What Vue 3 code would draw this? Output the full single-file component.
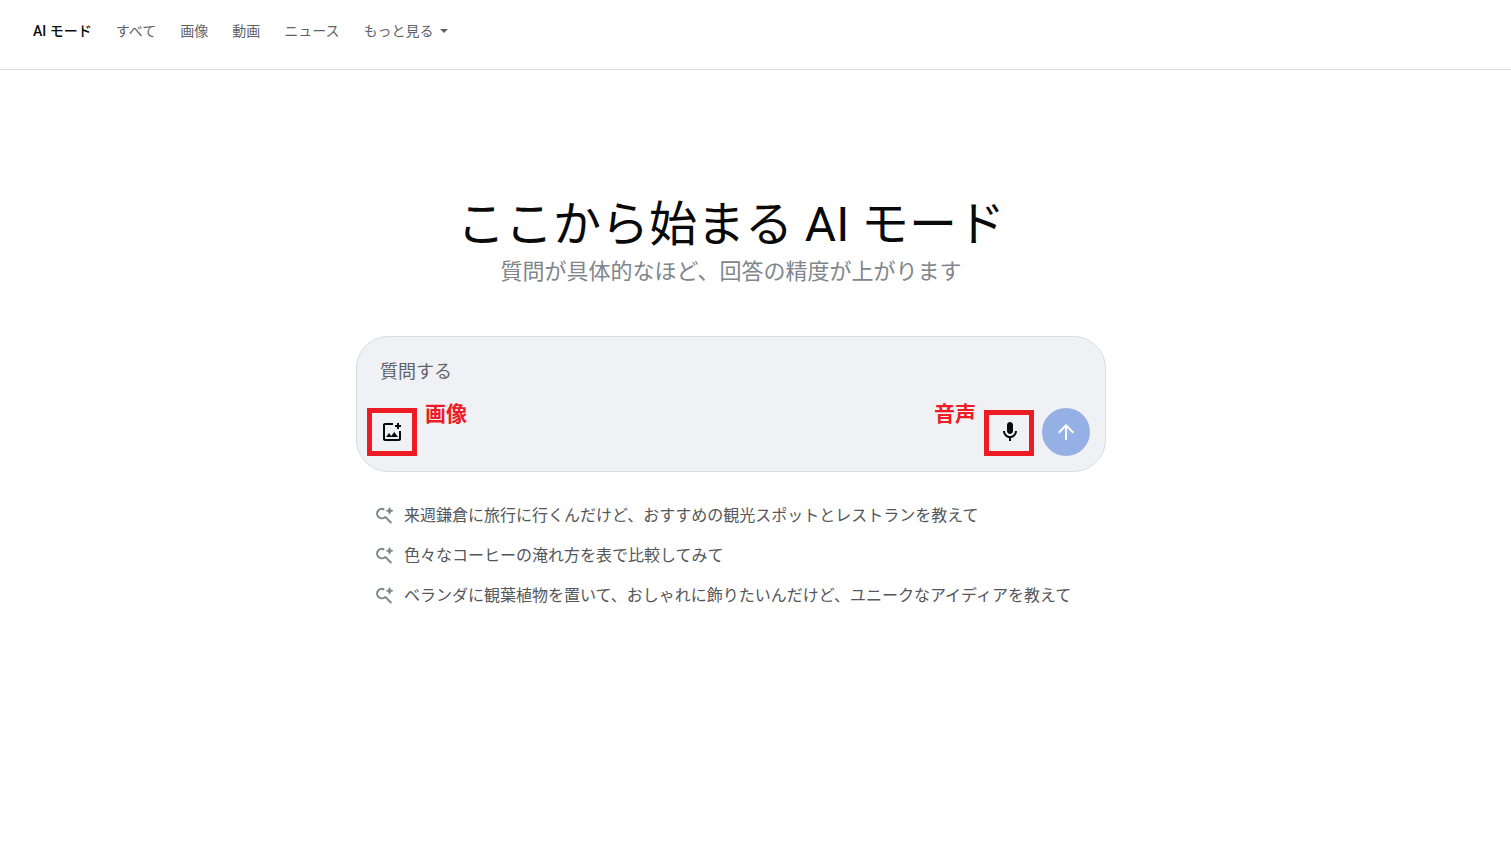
<template>
  <header class="top-bar">
    <nav class="tabs">
      <a
        v-for="tab in tabs"
        :key="tab"
        href="#"
        class="tab"
        :class="{ active: tab === activeTab }"
        @click.prevent="activeTab = tab"
      >{{ tab }}</a>
      <button type="button" class="more">
        もっと見る
        <svg class="caret" viewBox="0 0 8 4" aria-hidden="true">
          <path d="M0 0h8L4 4z" />
        </svg>
      </button>
    </nav>
  </header>

  <main class="content">
    <h1>ここから始まる AI モード</h1>
    <p class="subtitle">質問が具体的なほど、回答の精度が上がります</p>

    <form class="ask-box" @submit.prevent>
      <textarea v-model="question" rows="1" placeholder="質問する" aria-label="質問する"></textarea>

      <div class="actions">
        <button id="add-image" type="button" class="tool-btn image-btn">
          <svg viewBox="0 0 24 24" aria-hidden="true">
            <path d="M13 3v2H5v14h14v-8h2v8c0 1.1-.9 2-2 2H5c-1.1 0-2-.9-2-2V5c0-1.1.9-2 2-2z" />
            <path d="M17 3h2v2h2v2h-2v2h-2V7h-2V5h2z" />
            <path d="M6 17h12l-3.75-5-3 4L9 13z" />
          </svg>
        </button>
        <label for="add-image" class="note">画像</label>

        <span class="spacer"></span>

        <label for="voice" class="note">音声</label>
        <button id="voice" type="button" class="tool-btn voice-btn">
          <svg viewBox="0 0 24 24" aria-hidden="true">
            <path d="M12 14c1.66 0 3-1.34 3-3V5c0-1.66-1.34-3-3-3S9 3.34 9 5v6c0 1.66 1.34 3 3 3z" />
            <path d="M17 11c0 2.76-2.24 5-5 5s-5-2.24-5-5H5c0 3.53 2.61 6.43 6 6.92V21h2v-3.08c3.39-.49 6-3.39 6-6.92z" />
          </svg>
        </button>
        <button type="submit" class="send-btn" aria-label="送信">
          <svg viewBox="0 0 24 24" aria-hidden="true">
            <path d="M4 12l1.41 1.41L11 7.83V20h2V7.83l5.58 5.59L20 12l-8-8z" />
          </svg>
        </button>
      </div>
    </form>

    <ul class="suggestions">
      <li v-for="item in suggestions" :key="item">
        <button type="button" class="suggestion" @click="question = item">
          <svg viewBox="0 0 18 18" aria-hidden="true">
            <path class="lens" d="M8.3 2.6A4.7 4.7 0 1 0 9.4 9.6M9.1 9.6L15.3 16" />
            <path class="spark" d="M13.6 0.2Q14.2 3.2 17.2 3.8Q14.2 4.4 13.6 7.4Q13 4.4 10 3.8Q13 3.2 13.6 0.2z" />
          </svg>
          <span>{{ item }}</span>
        </button>
      </li>
    </ul>
  </main>
</template>

<script setup>
import { ref } from 'vue'

const tabs = ['AI モード', 'すべて', '画像', '動画', 'ニュース']
const activeTab = ref('AI モード')
const question = ref('')

const suggestions = [
  '来週鎌倉に旅行に行くんだけど、おすすめの観光スポットとレストランを教えて',
  '色々なコーヒーの淹れ方を表で比較してみて',
  'ベランダに観葉植物を置いて、おしゃれに飾りたいんだけど、ユニークなアイディアを教えて',
]
</script>

<style>
body {
  margin: 0;
  background: #fff;
  font-family: Roboto, 'Noto Sans CJK JP', sans-serif;
}
</style>

<style scoped>
button,
textarea {
  font: inherit;
  border: 0;
  padding: 0;
  background: none;
}

button {
  cursor: pointer;
}

svg {
  display: block;
  flex: none;
  fill: currentColor;
}

.top-bar {
  padding: 21px 33px 28px;
  border-bottom: 1px solid #dadce0;
}

.tabs {
  display: flex;
  gap: 24px;
  font-size: 14px;
  line-height: 20px;
}

.tab,
.more {
  color: #5f6368;
  text-decoration: none;
  white-space: nowrap;
}

.tab.active {
  color: #0a0a0a;
  font-weight: 500;
}

.more {
  display: flex;
  align-items: center;
  gap: 6px;
}

.caret {
  width: 8px;
  height: 4px;
}

.content {
  max-width: 750px;
  margin: 0 auto;
  padding: 127px 49px 48px 0;
}

h1 {
  margin: 0;
  font-size: 48px;
  line-height: 56px;
  font-weight: 400;
  text-align: center;
  color: #0a0a0a;
}

.subtitle {
  margin: 3px 0 0;
  font-size: 22px;
  line-height: 32px;
  text-align: center;
  color: #80868b;
}

.ask-box {
  margin-top: 48px;
  padding: 21px 15px 15px 10px;
  border: 1px solid #dadce0;
  border-radius: 32px;
  background: #f0f1f5;
}

textarea {
  display: block;
  box-sizing: border-box;
  width: 100%;
  height: 28px;
  padding: 0 13px;
  font-size: 18px;
  line-height: 28px;
  color: #0a0a0a;
  resize: none;
  outline: none;
  overflow: hidden;
}

textarea::placeholder {
  color: #5f6368;
  opacity: 1;
}

.actions {
  display: flex;
  align-items: flex-end;
  gap: 8px;
  min-height: 55px;
  margin-top: 15px;
}

.spacer {
  flex: 1;
}

.note {
  align-self: flex-start;
  font-size: 21px;
  line-height: 26px;
  font-weight: 700;
  color: #ed1c24;
}

.tool-btn {
  display: flex;
  align-items: center;
  justify-content: center;
  box-sizing: border-box;
  width: 50px;
  border: 5px solid #ed1c24;
  color: #0a0a0a;
}

.tool-btn svg,
.send-btn svg {
  width: 24px;
  height: 24px;
}

.image-btn {
  height: 48px;
}

.voice-btn {
  height: 46px;
  padding: 0 0 2px 2px;
}

.send-btn {
  display: flex;
  align-items: center;
  justify-content: center;
  width: 48px;
  height: 48px;
  border-radius: 50%;
  background: #95b0e5;
  color: #fff;
}

.suggestions {
  margin: 24px 0 0;
  padding: 0 0 0 20px;
  list-style: none;
}

.suggestion {
  display: flex;
  align-items: center;
  gap: 10px;
  min-height: 40px;
  font-size: 16px;
  line-height: 24px;
  text-align: left;
  color: #545659;
}

.suggestion svg {
  width: 18px;
  height: 18px;
  color: #80868b;
}

.lens {
  fill: none;
  stroke: currentColor;
  stroke-width: 2;
}

.spark {
  stroke: currentColor;
  stroke-width: 0.5;
}
</style>
